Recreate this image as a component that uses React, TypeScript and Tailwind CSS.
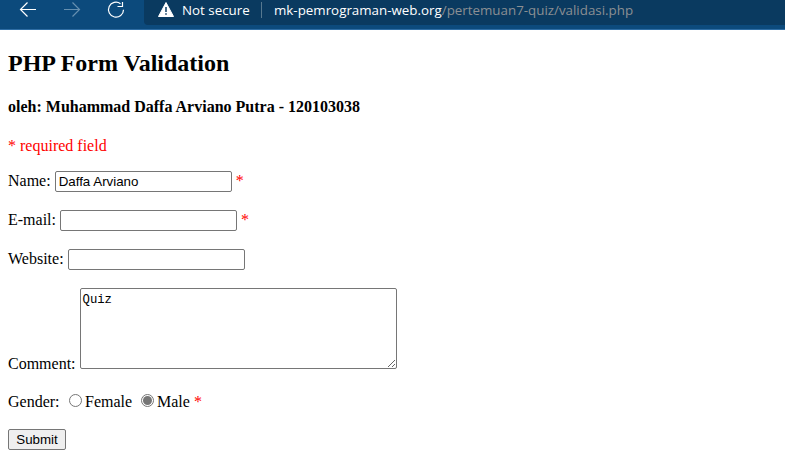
import type { ReactNode } from "react";

function BrowserBar() {
  return (
    <header className="flex h-[30px] items-start border-b border-[#2e6da4] bg-[#0c4a7c] font-['Open_Sans',sans-serif] text-[13.350px] leading-[20px] text-white">
      <div className="flex h-[29px] w-[144px] shrink-0">
        <svg width="144" height="29" viewBox="0 0 144 29" fill="none" strokeWidth="1.2">
          <path d="M36 9.5H20.5M27.5 2.5l-7 7 7 7" stroke="#fff" />
          <path d="M64 9.5h15.500M72.500 2.500l7 7-7 7" stroke="#6690b0" />
          <path d="M120.500 3.700A7.500 7.500 0 1 0 123.500 9.700M117.500 6.500h5V2" stroke="#fff" />
        </svg>
      </div>
      <div className="flex h-[25px] flex-1 items-start rounded-bl-[4px] bg-[#0a3a60] pl-[14px]">
        <svg className="mt-[2px] shrink-0" width="16" height="15" viewBox="0 0 16 15">
          <path d="M8 0.500 15.500 14.500H0.500Z" fill="#fff" stroke="#fff" strokeLinejoin="round" />
          <path d="M8 5v5M8 11.200v1.600" stroke="#0a3a60" strokeWidth="1.500" />
        </svg>
        <span className="ml-[8px] w-[79px] shrink-0 whitespace-nowrap">Not secure</span>
        <span className="mt-[2px] h-[16px] w-px shrink-0 bg-[#56788f]" />
        <span className="ml-[12px] whitespace-nowrap">
          mk-pemrograman-web.org<span className="text-[#8b8f93]">/pertemuan7-quiz/validasi.php</span>
        </span>
      </div>
    </header>
  );
}

function Field({ label, children, required }: { label: string; children: ReactNode; required?: boolean }) {
  return (
    <div className="mb-[18px] flex h-[21px] items-center gap-[4px]">
      <label className="mb-[1px]">{label}</label>
      {children}
      {required && <span className="mb-[1px] text-[#ff0000]">*</span>}
    </div>
  );
}

const inputStyle =
  "h-[21px] w-[177px] rounded-[2px] border border-[#767676] bg-white px-[3px] font-['Liberation_Sans',sans-serif] text-[13.333px] leading-[15px] outline-none";

function Radio({ checked }: { checked?: boolean }) {
  return (
    <span className="mb-[3px] mr-[3px] flex h-[13px] w-[13px] items-center justify-center rounded-full border border-[#767676] bg-white">
      {checked && <span className="h-[9px] w-[9px] rounded-full bg-[#767676]" />}
    </span>
  );
}

export default function App() {
  return (
    <div className="h-[475px] w-[785px] overflow-hidden bg-white font-['Liberation_Serif',serif] text-[16px] leading-[18px] text-black">
      <BrowserBar />
      <main className="px-[8px] pt-[20px]">
        <h2 className="h-[27px] text-[24px] font-bold leading-[27px]">PHP Form Validation</h2>
        <h4 className="mt-[21px] font-bold">oleh: Muhammad Daffa Arviano Putra - 120103038</h4>
        <p className="mt-[21px] text-[#ff0000]">* required field</p>
        <form className="mt-[16px]">
          <Field label="Name:" required>
            <input className={inputStyle} defaultValue="Daffa Arviano" />
          </Field>
          <Field label="E-mail:" required>
            <input className={inputStyle} />
          </Field>
          <Field label="Website:">
            <input className={inputStyle} />
          </Field>
          <div className="flex h-[81px] items-end gap-[4px]">
            <label className="-mb-[4px]">Comment:</label>
            <textarea
              className="h-[81px] w-[317px] resize rounded-[2px] border border-[#767676] bg-white px-[2px] py-[4px] font-['Liberation_Mono',monospace] text-[12.250px] leading-[15px] outline-none"
              defaultValue="Quiz"
            />
          </div>
          <div className="mt-[24px] flex h-[18px] items-center">
            <span className="w-[61px]">Gender:</span>
            <Radio />
            <span className="w-[56px]">Female</span>
            <Radio checked />
            <span>Male</span>
            <span className="ml-[4px] text-[#ff0000]">*</span>
          </div>
          <button
            type="button"
            className="mt-[18px] block h-[21px] w-[58px] rounded-[2px] border border-[#767676] bg-[#efefef] font-['Liberation_Sans',sans-serif] text-[13.333px] leading-[15px]"
          >
            Submit
          </button>
        </form>
      </main>
    </div>
  );
}
